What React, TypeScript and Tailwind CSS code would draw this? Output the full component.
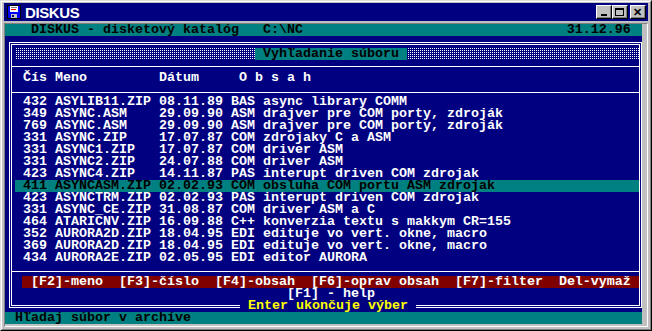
import React from "react";

const rows: [string, string, string, string, string][] = [
  ["432", "ASYLIB11.ZIP", "08.11.89", "BAS", "async library COMM"],
  ["349", "ASYNC.ASM", "29.09.90", "ASM", "drajver pre COM porty, zdroják"],
  ["769", "ASYNC.ASM", "29.09.90", "ASM", "drajver pre COM porty, zdroják"],
  ["331", "ASYNC.ZIP", "17.07.87", "COM", "zdrojaky C a ASM"],
  ["331", "ASYNC1.ZIP", "17.07.87", "COM", "driver ASM"],
  ["331", "ASYNC2.ZIP", "24.07.88", "COM", "driver ASM"],
  ["423", "ASYNC4.ZIP", "14.11.87", "PAS", "interupt driven COM zdrojak"],
  ["411", "ASYNCASM.ZIP", "02.02.93", "COM", "obsluha COM portu ASM zdrojak"],
  ["423", "ASYNCTRM.ZIP", "02.02.93", "PAS", "interupt driven COM zdrojak"],
  ["331", "ASYNC_CE.ZIP", "31.08.87", "COM", "driver ASM a C"],
  ["464", "ATARICNV.ZIP", "16.09.88", "C++", "konverzia textu s makkym CR=155"],
  ["352", "AURORA2D.ZIP", "18.04.95", "EDI", "edituje vo vert. okne, macro"],
  ["369", "AURORA2D.ZIP", "18.04.95", "EDI", "edituje vo vert. okne, macro"],
  ["434", "AURORA2E.ZIP", "02.05.95", "EDI", "editor AURORA"],
];

const pad = (s: string, n: number) => s + " ".repeat(Math.max(0, n - s.length));

function Sep({ top }: { top: string }) {
  return (
    <div className="h-[12px] flex flex-col">
      <div className={top} />
      <div className="h-[1px] bg-white" />
    </div>
  );
}

function FloppyIcon() {
  return (
    <svg width="14" height="14" viewBox="0 0 14 14" shapeRendering="crispEdges">
      <rect x="0" y="0" width="14" height="14" fill="#000000" />
      <rect x="1" y="1" width="12" height="12" fill="#0000ff" />
      <rect x="3" y="1" width="8" height="6" fill="#ffffff" />
      <rect x="4" y="2" width="6" height="1" fill="#808080" />
      <rect x="4" y="4" width="5" height="1" fill="#ff0000" />
      <rect x="4" y="9" width="6" height="4" fill="#c0c0c0" />
      <rect x="5" y="10" width="2" height="2" fill="#000080" />
    </svg>
  );
}

function TitleButton({ children }: { children: React.ReactNode }) {
  return (
    <div className="w-[16px] h-[14px] bg-[#c0c0c0] border-t border-l border-white border-r border-b border-r-black border-b-black shadow-[inset_-1px_-1px_0_#808080] flex items-center justify-center">
      {children}
    </div>
  );
}

const dither =
  "bg-[conic-gradient(#ffffff_0_25%,transparent_0)] bg-[length:2px_2px]";

export default function App() {
  return (
    <div className="w-[652px] h-[331px] bg-[#c0c0c0] border-t border-l border-t-[#dfdfdf] border-l-[#dfdfdf] border-r border-b border-r-black border-b-black overflow-hidden">
      <div className="h-full border-t border-l border-white border-r border-b border-r-[#808080] border-b-[#808080] px-[2px] pt-[1px] pb-[2px] flex flex-col">
        {/* title bar */}
        <div className="h-[18px] bg-[#000080] flex items-center pl-[3px] pr-[2px]">
          <FloppyIcon />
          <div className="ml-[4px] text-white font-bold text-[15px] tracking-[-0.4px] leading-none font-['Liberation_Sans',Arial,sans-serif]">
            DISKUS
          </div>
          <div className="flex-1" />
          <TitleButton>
            <div className="w-[6px] h-[2px] bg-black mt-[6px] -ml-[1px]" />
          </TitleButton>
          <TitleButton>
            <div className="w-[9px] h-[8px] border border-black border-t-2 -ml-[1px]" />
          </TitleButton>
          <div className="w-[2px]" />
          <TitleButton>
            <span className="text-black font-bold text-[11px] leading-none font-['Liberation_Sans',Arial,sans-serif] -ml-[1px]">
              ✕
            </span>
          </TitleButton>
        </div>
        <div className="h-[2px]" />
        {/* client */}
        <div className="flex-1 border-t border-l border-[#808080] border-r border-b border-r-white border-b-white flex">
          <div className="w-[637px] h-[300px] bg-[#000080] text-white whitespace-pre text-[13.333px] leading-[12px] font-bold font-['Liberation_Mono','Courier_New',monospace] flex flex-col">
            {/* row 0 */}
            <div className="h-[12px] bg-[#008080] text-black pl-[2px]">
              {pad("   DISKUS - disketový katalóg   C:\\NC", 70) + "31.12.96"}
            </div>
            {/* row 1 top border */}
            <div className="h-[12px] flex flex-col">
              <div className="h-[6px]" />
              <div className="ml-[4px] w-[633px] h-[6px] border-t-[3px] border-x-[3px] border-double border-white" />
            </div>
            {/* box body */}
            <div className="ml-[4px] w-[633px] border-x-[3px] border-double border-white flex flex-col">
              {/* search row */}
              <div className="h-[12px] flex pl-[3px]">
                <div className={`w-[240px] ${dither}`} />
                <div className="w-[152px] bg-[#008080] text-black">{" Vyhľadanie súboru "}</div>
                <div className={`flex-1 ${dither}`} />
              </div>
              <Sep top="h-[6px]" />
              <div className="h-[12px] pl-[11px]">
                {"Čís Meno         Dátum     O b s a h"}
              </div>
              <Sep top="h-[8px]" />
              {rows.map((r, i) => {
                const line = `${r[0]} ${pad(r[1], 12)} ${r[2]} ${r[3]} ${r[4]}`;
                const hl = i === 7;
                return (
                  <div key={i} className="h-[12px] pl-[3px]">
                    <div className={`h-[12px] pl-[8px] ${hl ? "bg-[#008080] text-black" : ""}`}>{line}</div>
                  </div>
                );
              })}
              <Sep top="h-[7px]" />
              <div className="h-[12px] pl-[10px]">
                <div className="h-[12px] bg-[#800000] pl-[1px]">
                  {" [F2]-meno  [F3]-číslo  [F4]-obsah  [F6]-oprav obsah  [F7]-filter  Del-vymaž"}
                </div>
              </div>
              <div className="h-[12px] pl-[275px]">{"[F1] - help"}</div>
            </div>
            {/* bottom border row */}
            <div className="h-[12px] ml-[4px] w-[633px] flex items-start">
              <div className="w-[231px] h-[8px] border-l-[3px] border-b-[3px] border-double border-white" />
              <div className="w-[8px]" />
              <div className="text-[#ffff00]">{"Enter ukončuje výber"}</div>
              <div className="w-[8px]" />
              <div className="flex-1 h-[8px] border-r-[3px] border-b-[3px] border-double border-white" />
            </div>
            {/* status */}
            <div className="h-[12px] bg-[#008080] text-black pl-[2px]">
              {" Hľadaj súbor v archíve"}
            </div>
          </div>
          <div className="flex-1 bg-[#c0c0c0]" />
        </div>
      </div>
    </div>
  );
}
